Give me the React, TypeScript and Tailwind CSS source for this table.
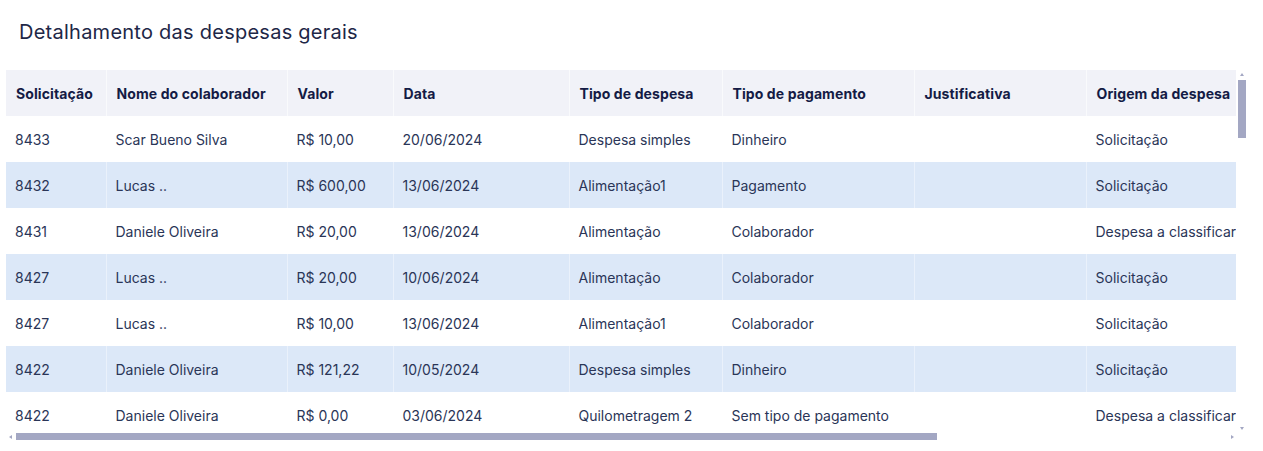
import React from 'react';

type Row = {
  id: string;
  nome: string;
  valor: string;
  data: string;
  tipoDespesa: string;
  tipoPagamento: string;
  justificativa: string;
  origem: string;
};

const columns = [
  { key: 'id', label: 'Solicitação', width: 'w-[100px]' },
  { key: 'nome', label: 'Nome do colaborador', width: 'w-[181px]' },
  { key: 'valor', label: 'Valor', width: 'w-[106px]' },
  { key: 'data', label: 'Data', width: 'w-[176px]' },
  { key: 'tipoDespesa', label: 'Tipo de despesa', width: 'w-[153px]' },
  { key: 'tipoPagamento', label: 'Tipo de pagamento', width: 'w-[192px]' },
  { key: 'justificativa', label: 'Justificativa', width: 'w-[172px]' },
  { key: 'origem', label: 'Origem da despesa', width: 'w-[547px]' },
] as const;

const rows: Row[] = [
  { id: '8433', nome: 'Scar Bueno Silva', valor: 'R$ 10,00', data: '20/06/2024', tipoDespesa: 'Despesa simples', tipoPagamento: 'Dinheiro', justificativa: '', origem: 'Solicitação' },
  { id: '8432', nome: 'Lucas ..', valor: 'R$ 600,00', data: '13/06/2024', tipoDespesa: 'Alimentação1', tipoPagamento: 'Pagamento', justificativa: '', origem: 'Solicitação' },
  { id: '8431', nome: 'Daniele Oliveira', valor: 'R$ 20,00', data: '13/06/2024', tipoDespesa: 'Alimentação', tipoPagamento: 'Colaborador', justificativa: '', origem: 'Despesa a classificar' },
  { id: '8427', nome: 'Lucas ..', valor: 'R$ 20,00', data: '10/06/2024', tipoDespesa: 'Alimentação', tipoPagamento: 'Colaborador', justificativa: '', origem: 'Solicitação' },
  { id: '8427', nome: 'Lucas ..', valor: 'R$ 10,00', data: '13/06/2024', tipoDespesa: 'Alimentação1', tipoPagamento: 'Colaborador', justificativa: '', origem: 'Solicitação' },
  { id: '8422', nome: 'Daniele Oliveira', valor: 'R$ 121,22', data: '10/05/2024', tipoDespesa: 'Despesa simples', tipoPagamento: 'Dinheiro', justificativa: '', origem: 'Solicitação' },
  { id: '8422', nome: 'Daniele Oliveira', valor: 'R$ 0,00', data: '03/06/2024', tipoDespesa: 'Quilometragem 2', tipoPagamento: 'Sem tipo de pagamento', justificativa: '', origem: 'Despesa a classificar' },
];

// tiny scrollbar arrow
const Arrow: React.FC<{ dir: 'up' | 'down' | 'left' | 'right' }> = ({ dir }) => {
  const points = {
    up: '0,3 2,0 4,3',
    down: '0,0 4,0 2,3',
    left: '3,0 3,4 0,2',
    right: '0,0 0,4 3,2',
  }[dir];
  const vertical = dir === 'up' || dir === 'down';
  return (
    <div className="w-[8px] h-[8px] flex items-center justify-center shrink-0">
      <svg width={vertical ? 4 : 3} height={vertical ? 3 : 4} viewBox={vertical ? '0 0 4 3' : '0 0 3 4'}>
        <polygon points={points} fill="#a3a7c3" />
      </svg>
    </div>
  );
};

const App: React.FC = () => {
  return (
    <div className="w-[1263px] h-[451px] bg-white px-[6px] font-['Inter','Noto_Sans',sans-serif]">
      <h2 className="pt-[18px] pl-[13px] h-[46px] text-[20px] tracking-[0.25px] leading-[28px] text-[#1e2747]">
        Detalhamento das despesas gerais
      </h2>

      <div className="mt-[24px] flex">
        {/* Table viewport */}
        <div className="w-[1230px] h-[362px] overflow-hidden">
          <table className="w-[1627px] table-fixed border-collapse text-left text-[14px]">
            <thead>
              <tr className="bg-[#f1f2f8] h-[46px]">
                {columns.map((col) => (
                  <th
                    key={col.key}
                    className={`${col.width} px-[10px] font-bold tracking-[0.1px] text-[#141b45] border-r border-white/60 last:border-r-0 whitespace-nowrap`}
                  >
                    {col.label}
                  </th>
                ))}
              </tr>
            </thead>
            <tbody>
              {rows.map((row, i) => (
                <tr key={i} className={`h-[46px] ${i % 2 === 1 ? 'bg-[#dce8f8]' : 'bg-white'}`}>
                  {columns.map((col) => (
                    <td
                      key={col.key}
                      className="px-[9px] text-[#2a3557] border-r border-white/40 last:border-r-0 whitespace-nowrap"
                    >
                      {row[col.key]}
                    </td>
                  ))}
                </tr>
              ))}
            </tbody>
          </table>
        </div>

        {/* Vertical scrollbar */}
        <div className="ml-[2px] w-[8px] h-[362px] flex flex-col">
          <Arrow dir="up" />
          <div className="mt-[2px] h-[58px] w-[8px] bg-[#a3a7c3]" />
          <div className="flex-1" />
          <Arrow dir="down" />
        </div>
      </div>

      {/* Horizontal scrollbar */}
      <div className="w-[1230px] h-[9px] flex items-center">
        <Arrow dir="left" />
        <div className="ml-[2px] w-[921px] h-[7px] bg-[#a3a7c3]" />
        <div className="flex-1" />
        <Arrow dir="right" />
      </div>
    </div>
  );
};

export default App;
